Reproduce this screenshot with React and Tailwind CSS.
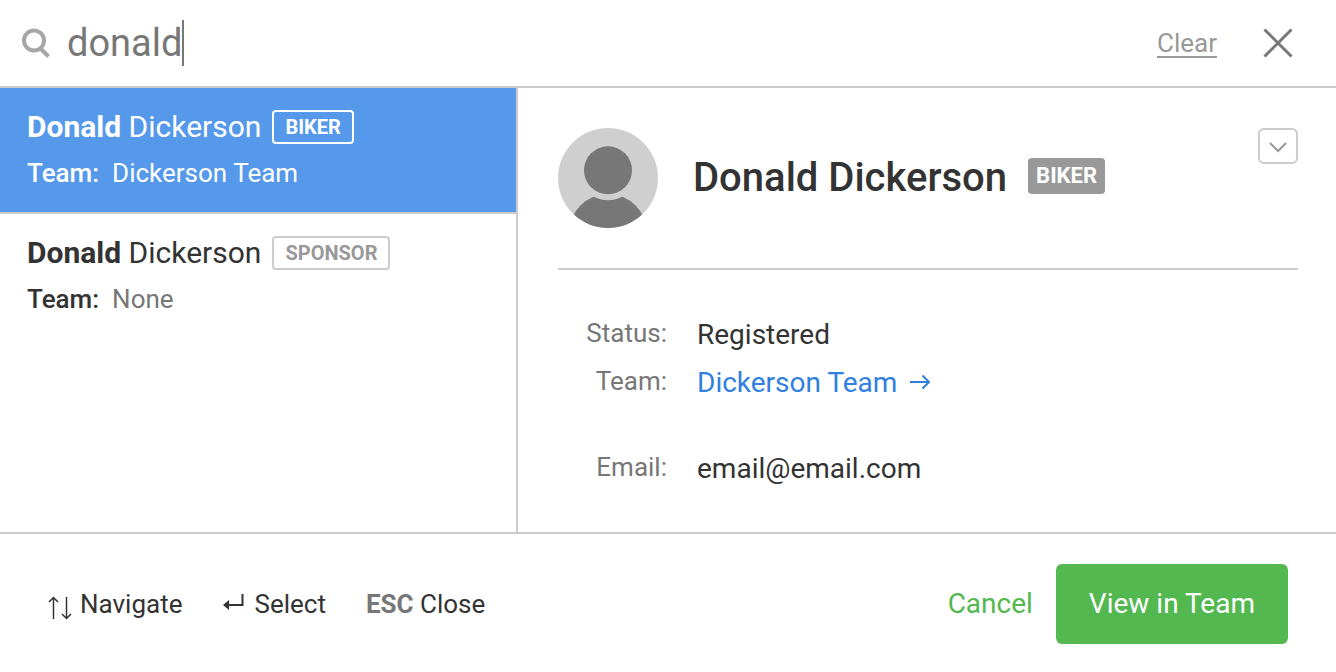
import { useState } from 'react'

const RESULTS = [
  { id: 1, first: 'Donald', last: 'Dickerson', role: 'BIKER',   team: 'Dickerson Team' },
  { id: 2, first: 'Donald', last: 'Dickerson', role: 'SPONSOR', team: null },
]

function SearchIcon() {
  return (
    <svg className="w-7 h-8" viewBox="0 0 28 32" fill="none" stroke="#a6a6a6" role="img" aria-label="Search">
      <circle cx="12" cy="13.5" r="10" strokeWidth="4" />
      <path d="M18.5 21.5l8 8" strokeWidth="4" />
    </svg>
  )
}

function CloseIcon() {
  return (
    <svg className="w-8 h-8" viewBox="0 0 32 32" fill="none" stroke="#777" strokeWidth="3" aria-hidden="true">
      <path d="M2.5 2.5l27 27M29.5 2.5l-27 27" />
    </svg>
  )
}

function ChevronIcon() {
  return (
    <svg className="w-5 h-5" viewBox="0 0 20 20" fill="none" stroke="#999" strokeWidth="2" aria-hidden="true">
      <path d="M2 7l8 8 8-8" />
    </svg>
  )
}

function ArrowIcon() {
  return (
    <svg className="w-5 h-4" viewBox="0 0 20 16" fill="none" stroke="currentColor" strokeWidth="2" aria-hidden="true">
      <path d="M0 7h19M12.5 0.5L19 7l-6.5 6.5" />
    </svg>
  )
}

function UpDownIcon() {
  return (
    <svg className="w-6 h-8" viewBox="0 0 24 32" fill="none" stroke="#333" strokeWidth="1.5" aria-hidden="true">
      <path d="M5.5 31V9.5M1 14l4.5-4.5L10 14" />
      <path d="M18.5 9v21.5M14 26l4.5 4.5L23 26" />
    </svg>
  )
}

function ReturnIcon() {
  return (
    <svg className="w-6 h-6" viewBox="0 0 24 24" fill="none" aria-hidden="true">
      <path d="M5 13h15.5V2" stroke="#333" strokeWidth="2" />
      <path d="M1 13l6-5v10z" fill="#333" />
    </svg>
  )
}

function Avatar() {
  return (
    <svg className="w-25 h-25 shrink-0" viewBox="0 0 100 100" role="img" aria-label="Profile">
      <clipPath id="avatar-clip">
        <circle cx="50" cy="50" r="50" />
      </clipPath>
      <g clipPath="url(#avatar-clip)">
        <rect width="100" height="100" fill="#cfcfcf" />
        <circle cx="50" cy="105" r="39" fill="#777" />
        <circle cx="50" cy="42.3" r="30" fill="#cfcfcf" />
        <circle cx="50" cy="42.3" r="24" fill="#777" />
      </g>
    </svg>
  )
}

function ResultItem({ result, selected, onSelect }) {
  return (
    <li className="border-b-2 border-[#ccc] last:border-b-0">
      <button
        onClick={onSelect}
        className={`block w-full text-left px-[27px] py-[22px] ${selected ? 'bg-[#5699ea] text-white' : 'bg-white text-[#333]'}`}
      >
        <span className="flex items-center text-[30px] leading-[34px]">
          <span><b className="font-bold">{result.first}</b> {result.last}</span>
          <span
            className={`ml-[11px] px-[11px] border-2 rounded text-[20px] leading-[30px] font-bold ${selected ? 'border-white' : 'border-[#ccc] text-[#999]'}`}
          >
            {result.role}
          </span>
        </span>
        <span className="flex gap-[13px] mt-3 text-[26px] leading-[34px]">
          <span className="font-medium">Team:</span>
          <span className={selected ? 'text-white' : 'text-[#777]'}>{result.team ?? 'None'}</span>
        </span>
      </button>
    </li>
  )
}

function DetailRow({ label, children }) {
  return (
    <div className="flex items-start gap-[30px]">
      <dt className="w-[109px] shrink-0 text-right text-[26px] leading-[44px] text-[#777]">{label}:</dt>
      <dd className="text-[28px] leading-[48px]">{children}</dd>
    </div>
  )
}

export default function App() {
  const [query, setQuery] = useState('donald')
  const [selectedId, setSelectedId] = useState(1)

  return (
    <div className="min-h-screen flex flex-col bg-white text-[#333] font-['Roboto',sans-serif]">
      <header className="flex items-center h-[88px] pl-[22px] pr-[42px] border-b-2 border-[#ccc]">
        <label htmlFor="search" className="shrink-0"><SearchIcon /></label>
        <input
          id="search"
          type="text"
          value={query}
          onChange={(e) => setQuery(e.target.value)}
          className="field-sizing-content min-w-0 ml-[17px] text-[38px] leading-[46px] text-[#777] caret-transparent outline-none"
        />
        <span className="w-[2px] h-[46px] bg-[#777]" />
        <button className="ml-auto text-[26px] text-[#999] underline underline-offset-4 decoration-2">Clear</button>
        <button aria-label="Close" className="ml-[45px]"><CloseIcon /></button>
      </header>

      <main className="flex flex-1">
        <ul className="w-[518px] shrink-0 border-r-2 border-[#ccc]">
          {RESULTS.map((r) => (
            <ResultItem key={r.id} result={r} selected={r.id === selectedId} onSelect={() => setSelectedId(r.id)} />
          ))}
        </ul>

        <section className="flex-1 min-w-0 pt-10 pl-10 pr-[38px]">
          <div className="flex items-center pb-10 border-b-2 border-[#ccc]">
            <Avatar />
            <h1 className="ml-[35px] text-[40px] leading-[48px] font-medium">Donald Dickerson</h1>
            <span className="ml-[21px] mb-1 px-2 rounded bg-[#999] text-white text-[22px] leading-9 font-bold">BIKER</span>
            <button
              aria-label="More actions"
              className="ml-auto self-start flex items-center justify-center w-10 h-9 border-2 border-[#ccc] rounded-md"
            >
              <ChevronIcon />
            </button>
          </div>

          <dl className="pt-[41px]">
            <DetailRow label="Status">Registered</DetailRow>
            <DetailRow label="Team">
              <a href="#team" className="flex items-center gap-[13px] text-[#2f80e0]">
                Dickerson Team
                <ArrowIcon />
              </a>
            </DetailRow>
            <div className="mt-[38px]">
              <DetailRow label="Email">email@email.com</DetailRow>
            </div>
          </dl>
        </section>
      </main>

      <footer className="flex items-center justify-between pt-[30px] pb-7 px-12 border-t-2 border-[#ccc]">
        <ul className="flex items-center gap-10 text-[26px]">
          <li className="flex items-center gap-2"><UpDownIcon /> Navigate</li>
          <li className="flex items-center gap-2"><ReturnIcon /> Select</li>
          <li><kbd className="font-['Roboto',sans-serif] font-bold text-[#777]">ESC</kbd> Close</li>
        </ul>
        <div className="flex items-center gap-[23px] text-[28px]">
          <button className="text-[#52b84f]">Cancel</button>
          <button className="h-20 px-[33px] rounded-md bg-[#52b84f] text-white">View in Team</button>
        </div>
      </footer>
    </div>
  )
}
